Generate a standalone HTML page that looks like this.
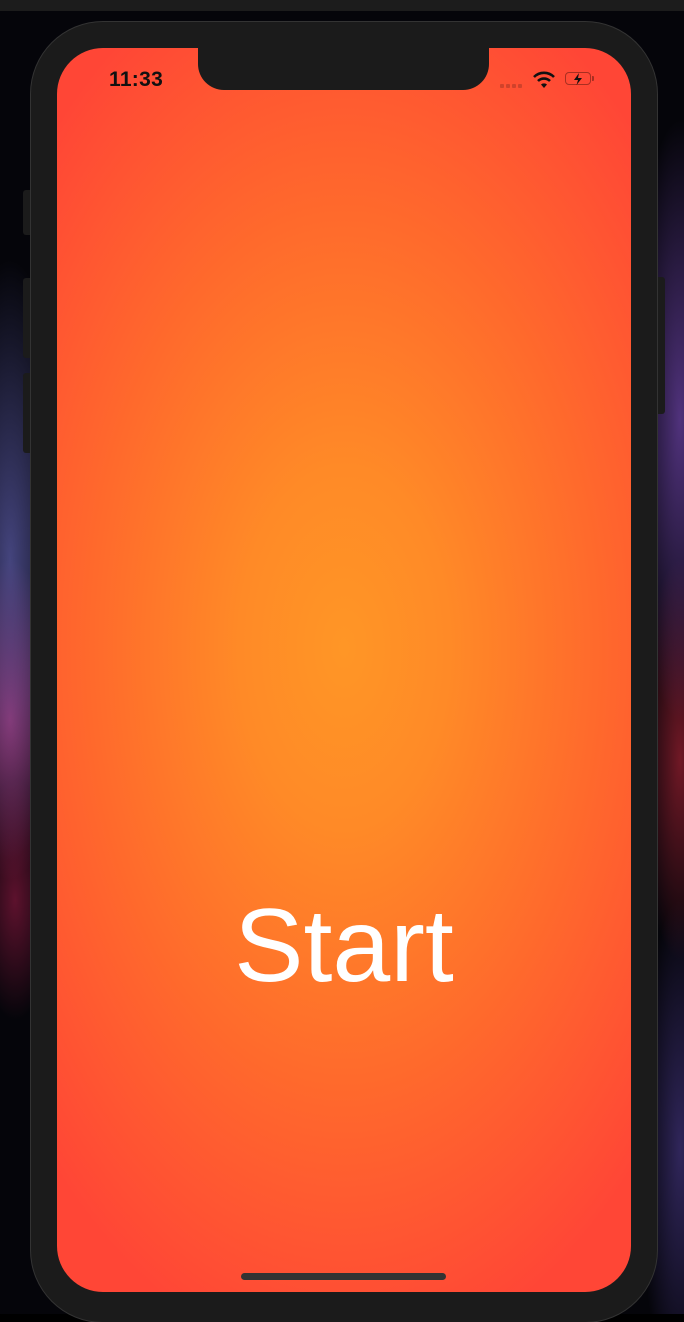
<!DOCTYPE html>
<html><head><style>
html,body{margin:0;padding:0;}
body{width:684px;height:1314px;position:relative;overflow:hidden;background:#000;font-family:"Liberation Sans",sans-serif;}
.bg{position:absolute;inset:0;background:
radial-gradient(ellipse 60px 300px at 10px 560px,rgba(120,120,220,.55),transparent),
radial-gradient(ellipse 50px 160px at 10px 720px,rgba(220,60,140,.6),transparent),
radial-gradient(ellipse 40px 120px at 15px 900px,rgba(180,30,80,.5),transparent),
radial-gradient(ellipse 50px 300px at 680px 420px,rgba(130,80,200,.6),transparent),
radial-gradient(ellipse 40px 200px at 680px 760px,rgba(200,40,60,.55),transparent),
radial-gradient(ellipse 40px 250px at 680px 1150px,rgba(90,70,170,.5),transparent),#05050a;}
.top{position:absolute;left:0;top:0;width:684px;height:11px;background:#1c1c1c;}
.frame{position:absolute;left:31px;top:22px;width:626px;height:1300px;border-radius:72px;background:#1b1b1b;box-shadow:0 0 0 1px #333;}
.btn{position:absolute;background:#1b1b1b;border-radius:3px;}
.screen{position:absolute;left:57px;top:48px;width:574px;height:1244px;border-radius:46px;overflow:hidden;
background:radial-gradient(ellipse 420px 720px at 287px 600px,#ff9626 0%,#ff8a27 25%,#ff6a2c 60%,#ff4636 100%);}
.notch{position:absolute;left:141px;top:-2px;width:291px;height:44px;background:#1b1b1b;border-radius:0 0 26px 26px;}
.time{position:absolute;left:52px;top:20px;font-size:21px;font-weight:bold;color:#111;letter-spacing:0.3px;}
.start{position:absolute;left:0;width:574px;text-align:center;top:846px;font-size:104px;color:#fff;line-height:1;}
.home{position:absolute;left:184px;top:1225px;width:205px;height:7px;border-radius:4px;background:#333;}
</style></head><body>
<div class="bg"></div>
<div class="top"></div>
<div class="btn" style="left:23px;top:190px;width:10px;height:45px"></div>
<div class="btn" style="left:23px;top:278px;width:10px;height:80px"></div>
<div class="btn" style="left:23px;top:373px;width:10px;height:80px"></div>
<div class="btn" style="left:655px;top:277px;width:10px;height:137px"></div>
<div class="frame"></div>
<div class="screen">
<div class="notch"></div>
<div class="time">11:33</div>
<div style="position:absolute;left:443px;top:36px;width:25px;height:4px;">
<span style="position:absolute;left:0;width:4px;height:4px;border-radius:1px;background:rgba(120,40,30,.35)"></span>
<span style="position:absolute;left:6px;width:4px;height:4px;border-radius:1px;background:rgba(120,40,30,.35)"></span>
<span style="position:absolute;left:12px;width:4px;height:4px;border-radius:1px;background:rgba(120,40,30,.35)"></span>
<span style="position:absolute;left:18px;width:4px;height:4px;border-radius:1px;background:rgba(120,40,30,.35)"></span>
</div>
<svg style="position:absolute;left:476px;top:23px" width="22" height="17" viewBox="0 0 22 17"><path d="M1 6 A14 14 0 0 1 21 6" stroke="#111" stroke-width="2.6" fill="none"/><path d="M5 10 A8.5 8.5 0 0 1 17 10" stroke="#111" stroke-width="2.6" fill="none"/><path d="M8 13.5 L11 17 L14 13.5 A4.5 4.5 0 0 0 8 13.5Z" fill="#111"/></svg>
<div style="position:absolute;left:508px;top:24px;width:26px;height:13px;border:1.5px solid rgba(110,30,20,.6);border-radius:4px;box-sizing:border-box"></div>
<div style="position:absolute;left:535px;top:28px;width:2px;height:5px;background:rgba(110,30,20,.6);border-radius:0 1px 1px 0"></div>
<svg style="position:absolute;left:516px;top:25px" width="10" height="12" viewBox="0 0 10 12"><path d="M6 0 L1 7 H5 L3.5 12 L9 5 H5 Z" fill="#111"/></svg>
<div class="start">Start</div>
<div class="home"></div>
</div>
</body></html>
